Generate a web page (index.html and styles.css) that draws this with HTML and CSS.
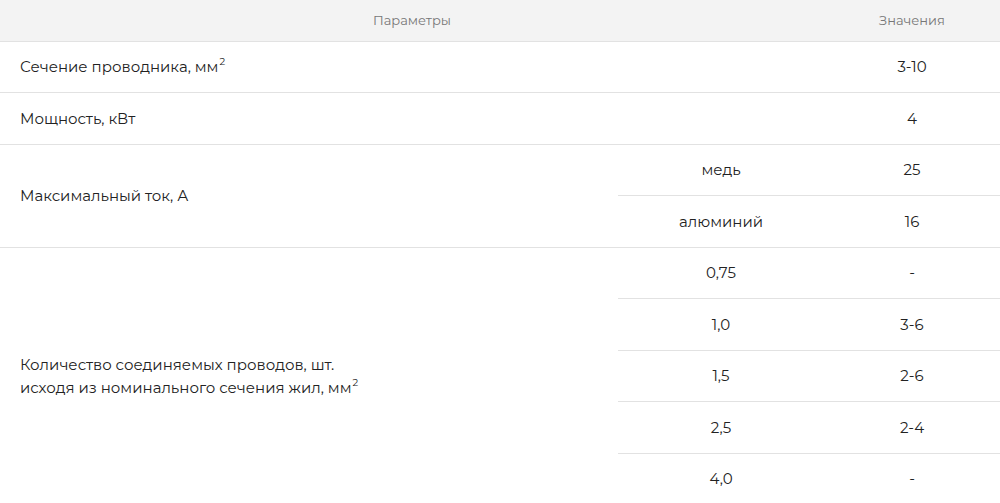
FILE: index.html
```html
<!DOCTYPE html>
<html lang="ru">
<head>
<meta charset="utf-8">
<link rel="stylesheet" href="styles.css">
</head>
<body>
<table class="spec">
  <colgroup>
    <col class="c1"><col class="c2"><col class="c3">
  </colgroup>
  <thead>
    <tr><th colspan="2">Параметры</th><th>Значения</th></tr>
  </thead>
  <tbody>
    <tr><td class="name" colspan="2">Сечение проводника, мм<sup>2</sup></td><td>3-10</td></tr>
    <tr><td class="name" colspan="2">Мощность, кВт</td><td>4</td></tr>
    <tr><td class="name" rowspan="2">Максимальный ток, А</td><td>медь</td><td>25</td></tr>
    <tr><td>алюминий</td><td>16</td></tr>
    <tr><td class="name" rowspan="5">Количество соединяемых проводов, шт.<br>исходя из номинального сечения жил, мм<sup>2</sup></td><td>0,75</td><td>-</td></tr>
    <tr><td>1,0</td><td>3-6</td></tr>
    <tr><td>1,5</td><td>2-6</td></tr>
    <tr><td>2,5</td><td>2-4</td></tr>
    <tr><td>4,0</td><td>-</td></tr>
  </tbody>
</table>
</body>
</html>
```
FILE: styles.css
```css
html, body {
  margin: 0;
  padding: 0;
  background: #ffffff;
}
body {
  font-family: "Montserrat", "DejaVu Sans", "Noto Sans", sans-serif;
  color: #222222;
}
.spec {
  width: 1000px;
  border-collapse: collapse;
  table-layout: fixed;
}
.c1 { width: 618px; }
.c2 { width: 206px; }
.c3 { width: 176px; }
.spec th {
  height: 40.5px;
  padding: 0;
  background: #f3f3f3;
  color: #777777;
  font-weight: normal;
  font-size: 13px;
  text-align: center;
  vertical-align: middle;
  border-bottom: 1px solid #e2e2e2;
}
.spec td {
  height: 50.5px;
  padding: 0;
  font-size: 15px;
  text-align: center;
  vertical-align: middle;
  border-bottom: 1px solid #e2e2e2;
  line-height: 23px;
}
.spec td.name {
  text-align: left;
  padding-left: 20px;
}
.spec sup {
  font-size: 10px;
  line-height: 0;
  vertical-align: 7px;
  margin-left: 1px;
}
```
